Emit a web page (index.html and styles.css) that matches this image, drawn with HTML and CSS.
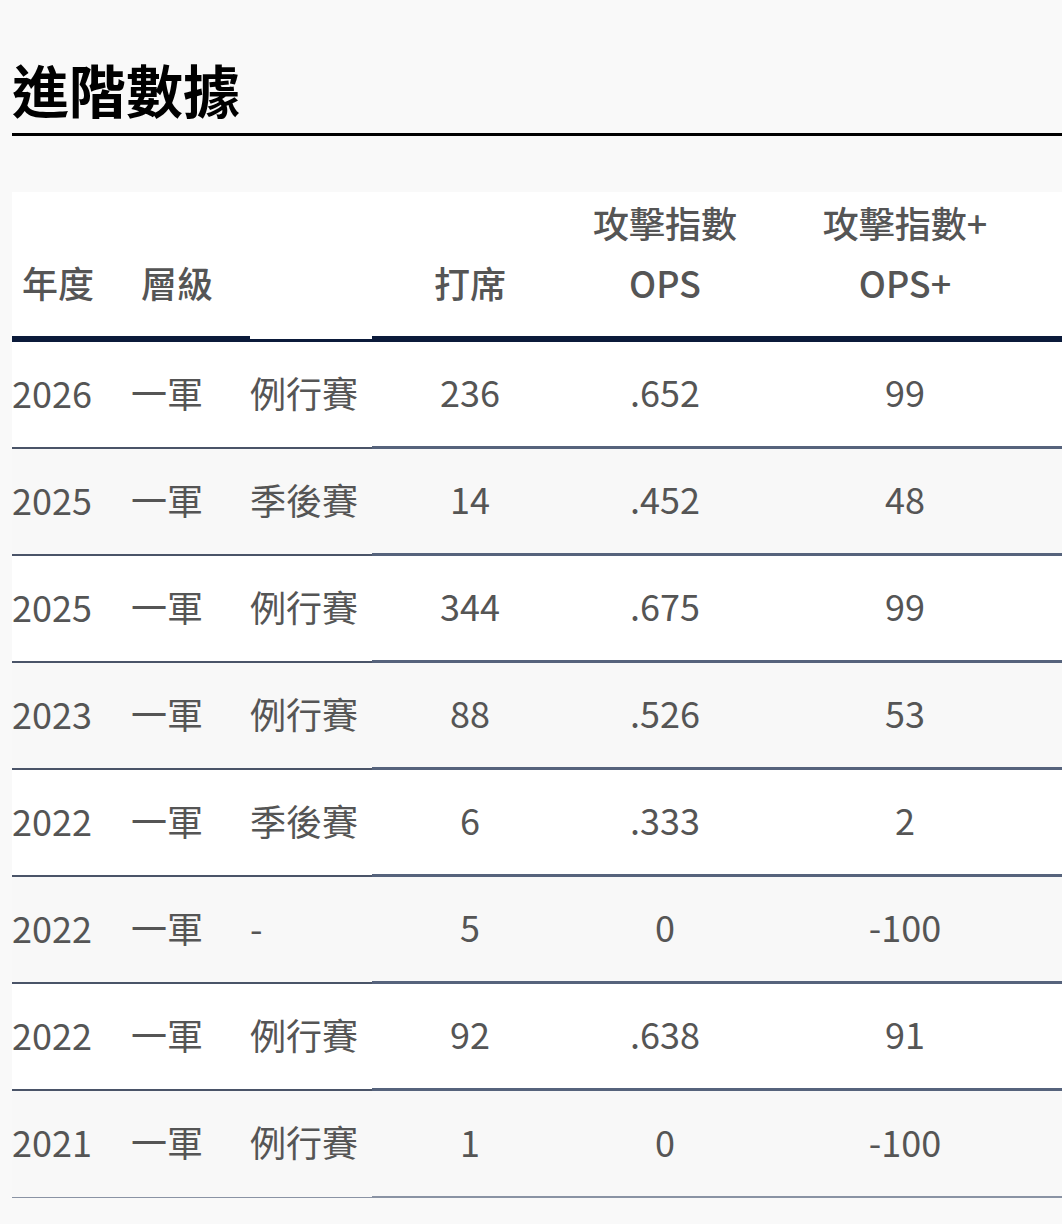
FILE: index.html
```html
<!DOCTYPE html>
<html lang="zh-Hant">
<head>
<meta charset="utf-8">
<title>進階數據</title>
<link rel="stylesheet" href="styles.css">
</head>
<body>
<main class="page">
  <h1 class="title">進階數據</h1>
  <div class="table-wrap">
    <table class="stats">
      <colgroup>
        <col class="c-year">
        <col class="c-level">
        <col class="c-type">
        <col class="c-pa">
        <col class="c-ops">
        <col class="c-opsp">
      </colgroup>
      <thead>
        <tr>
          <th class="left">年度</th>
          <th class="left">層級</th>
          <th class="blank"></th>
          <th>打席</th>
          <th>攻擊指數<br>OPS</th>
          <th class="last">攻擊指數+<br>OPS+</th>
        </tr>
      </thead>
      <tbody>
        <tr><td class="left">2026</td><td class="left">一軍</td><td class="left">例行賽</td><td>236</td><td>.652</td><td class="last">99</td></tr>
        <tr><td class="left">2025</td><td class="left">一軍</td><td class="left">季後賽</td><td>14</td><td>.452</td><td class="last">48</td></tr>
        <tr><td class="left">2025</td><td class="left">一軍</td><td class="left">例行賽</td><td>344</td><td>.675</td><td class="last">99</td></tr>
        <tr><td class="left">2023</td><td class="left">一軍</td><td class="left">例行賽</td><td>88</td><td>.526</td><td class="last">53</td></tr>
        <tr><td class="left">2022</td><td class="left">一軍</td><td class="left">季後賽</td><td>6</td><td>.333</td><td class="last">2</td></tr>
        <tr><td class="left">2022</td><td class="left">一軍</td><td class="left">-</td><td>5</td><td>0</td><td class="last">-100</td></tr>
        <tr><td class="left">2022</td><td class="left">一軍</td><td class="left">例行賽</td><td>92</td><td>.638</td><td class="last">91</td></tr>
        <tr><td class="left">2021</td><td class="left">一軍</td><td class="left">例行賽</td><td>1</td><td>0</td><td class="last">-100</td></tr>
      </tbody>
    </table>
  </div>
</main>
</body>
</html>
```

FILE: styles.css
```css
html, body {
  margin: 0;
  padding: 0;
  background: #f9f9f9;
}

body {
  font-family: "Noto Sans CJK TC", "Noto Sans", sans-serif;
  color: #555;
}

.page {
  padding-left: 12px;
  overflow: hidden;
}

.title {
  margin: 0;
  padding: 53px 0 10px;
  font-size: 57px;
  line-height: 70px;
  font-weight: 700;
  color: #000;
  border-bottom: 3px solid #000;
}

.table-wrap {
  margin-top: 56px;
}

.stats {
  width: 1050px;
  table-layout: fixed;
  border-collapse: separate;
  border-spacing: 0;
  font-size: 36px;
}

.c-year { width: 119px; }
.c-level { width: 119px; }
.c-type { width: 122px; }
.c-pa { width: 196px; }
.c-ops { width: 194px; }
.c-opsp { width: 300px; }

.stats th {
  background: #fff;
  font-weight: 500;
  color: #555;
  line-height: 60px;
  padding: 0 0 30px;
  vertical-align: bottom;
  text-align: center;
  box-shadow: inset 0 -6px 0 #0b1a3a;
}

.stats th.left {
  text-align: left;
  padding-left: 10px;
}

.stats th.blank {
  box-shadow: inset 0 -3px 0 #0b1a3a;
}

.stats th.last,
.stats td.last {
  padding-right: 14px;
}

.stats td {
  box-sizing: border-box;
  height: 107px;
  padding: 0 0 4px;
  font-weight: 400;
  line-height: 1.2;
  text-align: center;
  vertical-align: middle;
  border-bottom: 3px solid #56637c;
  white-space: nowrap;
}

.stats td.left {
  text-align: left;
  border-bottom: 2px solid #4a5468;
}

.stats td.last {
  padding-right: 14px;
}

.stats tbody tr:nth-child(odd) td {
  background: #fff;
}

.stats tbody tr:nth-child(even) td {
  background: #f8f8f8;
}

.stats tbody tr:last-child td {
  border-bottom: 2px solid #8a93a4;
}

.stats tbody tr:last-child td.left {
  border-bottom: 1px solid #8a93a4;
}
```
